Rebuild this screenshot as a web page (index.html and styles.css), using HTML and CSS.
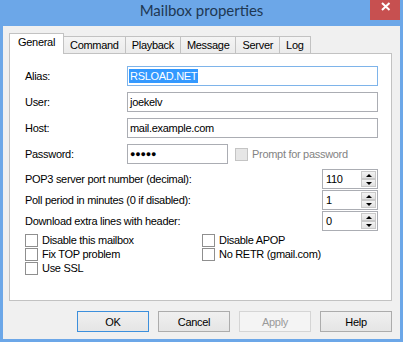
FILE: index.html
```html
<!DOCTYPE html>
<html>

<head>
  <meta charset="UTF-8">
  <title>Mailbox properties</title>
  <link rel="stylesheet" href="styles.css">
</head>

<body>
  <div class="window">
    <div class="titlebar">
      <span class="title">Mailbox properties</span>
      <div class="close">
        <svg width="30" height="20" viewBox="0 0 30 20">
          <path d="M12 3 L19.5 10 M19.5 3 L12 10" stroke="#fff" stroke-width="2" fill="none"/>
        </svg>
      </div>
    </div>

    <div class="client">
      <div class="tabs">
        <div class="tab active">General</div>
        <div class="tab">Command</div>
        <div class="tab">Playback</div>
        <div class="tab">Message</div>
        <div class="tab">Server</div>
        <div class="tab">Log</div>
      </div>

      <div class="panel">
        <div class="fields">
          <span class="lbl">Alias:</span>
          <div class="field focus"><span class="sel">RSLOAD.NET</span></div>
          <span class="lbl">User:</span>
          <div class="field">joekelv</div>
          <span class="lbl">Host:</span>
          <div class="field">mail.example.com</div>
          <span class="lbl">Password:</span>
          <div class="pw-row">
            <div class="field short dots">&#9679;&#9679;&#9679;&#9679;&#9679;</div>
            <div class="check disabled"><span class="box"></span>Prompt for password</div>
          </div>
        </div>

        <div class="spins">
          <div class="spin-row">
            <span>POP3 server port number (decimal):</span>
            <div class="spin"><span class="val">110</span><span class="btns"><span class="sbtn"><i class="up"></i></span><span class="sbtn"><i class="down"></i></span></span></div>
          </div>
          <div class="spin-row">
            <span>Poll period in minutes (0 if disabled):</span>
            <div class="spin"><span class="val">1</span><span class="btns"><span class="sbtn"><i class="up"></i></span><span class="sbtn"><i class="down"></i></span></span></div>
          </div>
          <div class="spin-row">
            <span>Download extra lines with header:</span>
            <div class="spin"><span class="val">0</span><span class="btns"><span class="sbtn"><i class="up"></i></span><span class="sbtn"><i class="down"></i></span></span></div>
          </div>
        </div>

        <div class="checks">
          <div class="check"><span class="box"></span>Disable this mailbox</div>
          <div class="check"><span class="box"></span>Disable APOP</div>
          <div class="check"><span class="box"></span>Fix TOP problem</div>
          <div class="check"><span class="box"></span>No RETR (gmail.com)</div>
          <div class="check"><span class="box"></span>Use SSL</div>
        </div>
      </div>

      <div class="buttons">
        <div class="btn default">OK</div>
        <div class="btn">Cancel</div>
        <div class="btn disabled">Apply</div>
        <div class="btn">Help</div>
      </div>
    </div>
  </div>
</body>

</html>
```
FILE: styles.css
```css
body {
  margin: 0;
  font-family: "Liberation Sans", Arial, sans-serif;
  font-size: 11px;
  letter-spacing: -0.3px;
  color: #000;
}

.window {
  width: 403px;
  height: 342px;
  background: #6ca7e8;
  display: flex;
  flex-direction: column;
}

.titlebar {
  height: 26px;
  flex: none;
  display: grid;
  grid-template-columns: 1fr auto 1fr;
}

.title {
  grid-column: 2;
  font-family: Lato, "Open Sans", sans-serif;
  font-size: 15px;
  line-height: 18px;
  padding-top: 1px;
  letter-spacing: 0;
  color: #1e3853;
}

.close {
  grid-column: 3;
  justify-self: end;
  width: 30px;
  height: 20px;
  margin-right: 3px;
  background: #c75050;
}

.close svg {
  display: block;
}

.client {
  flex: 1;
  margin: 0 3px 3px;
  background: #f0f0f0;
  padding: 7px 8px 0 6px;
}

/* tabs */

.tabs {
  display: flex;
  align-items: flex-end;
  height: 20px;
}

.tab {
  height: 17px;
  box-sizing: border-box;
  border: 1px solid #c2c2c2;
  border-bottom: none;
  background: linear-gradient(#f4f4f4, #ebebeb);
  padding: 0 6px;
  line-height: 16px;
  margin-left: -1px;
}

.tab.active {
  height: 21px;
  margin-left: 0;
  margin-bottom: -1px;
  padding: 0 8px;
  background: #fff;
  position: relative;
  z-index: 1;
}

.panel {
  height: 248px;
  box-sizing: border-box;
  border: 1px solid #c2c2c2;
  background: #fff;
  padding: 12px 13px 0 15px;
}

/* fields */

.fields {
  display: grid;
  grid-template-columns: 102px 1fr;
  row-gap: 6px;
  align-items: center;
}

.field {
  height: 20px;
  box-sizing: border-box;
  border: 1px solid #abadb3;
  padding: 0 2px;
  line-height: 18px;
  white-space: nowrap;
}

.field.focus {
  border-color: #7eb4ea;
}

.sel {
  display: inline-block;
  margin-left: -1px;
  padding: 0 1px;
  line-height: 14px;
  background: #3399ff;
  color: #fff;
}

.pw-row {
  display: flex;
  align-items: center;
  gap: 7px;
}

.field.short {
  width: 101px;
}

.dots {
  font-size: 9px;
  letter-spacing: -0.2px;
}

/* spinners */

.spins {
  margin-top: 5px;
  display: flex;
  flex-direction: column;
  gap: 1px;
}

.spin-row {
  display: flex;
  align-items: center;
  justify-content: space-between;
  height: 20px;
}

.spin {
  width: 56px;
  height: 20px;
  box-sizing: border-box;
  border: 1px solid #abadb3;
  display: flex;
}

.spin .val {
  flex: 1;
  padding-left: 3px;
  line-height: 18px;
}

.btns {
  width: 15px;
  margin: 1px 1px 1px 0;
  display: flex;
  flex-direction: column;
}

.sbtn {
  flex: 1;
  box-sizing: border-box;
  border: 1px solid #c9c9c9;
  background: linear-gradient(#f3f3f3, #e1e1e1);
  display: flex;
  align-items: center;
  justify-content: center;
}

.sbtn i {
  width: 0;
  height: 0;
  border-left: 3px solid transparent;
  border-right: 3px solid transparent;
}

.sbtn .up {
  border-bottom: 3px solid #000;
}

.sbtn .down {
  border-top: 3px solid #000;
}

/* checkboxes */

.checks {
  margin-top: 2px;
  display: grid;
  grid-template-columns: 177px 1fr;
  grid-auto-rows: 14px;
}

.check {
  display: flex;
  align-items: center;
  gap: 4px;
  white-space: nowrap;
}

.box {
  width: 13px;
  height: 13px;
  box-sizing: border-box;
  border: 1px solid #8f8f8f;
  background: #fff;
}

.check.disabled {
  color: #838383;
}

.check.disabled .box {
  border-color: #c4c4c4;
  background: #e6e6e6;
}

/* buttons */

.buttons {
  display: flex;
  justify-content: flex-end;
  gap: 9px;
  margin-top: 10px;
}

.btn {
  width: 72px;
  height: 21px;
  box-sizing: border-box;
  border: 1px solid #acacac;
  background: linear-gradient(#f0f0f0, #e5e5e5);
  display: flex;
  align-items: center;
  justify-content: center;
}

.btn.default {
  border-color: #3c8fdc;
}

.btn.disabled {
  border-color: #d5d5d5;
  background: #f4f4f4;
  color: #9a9a9a;
}
```
